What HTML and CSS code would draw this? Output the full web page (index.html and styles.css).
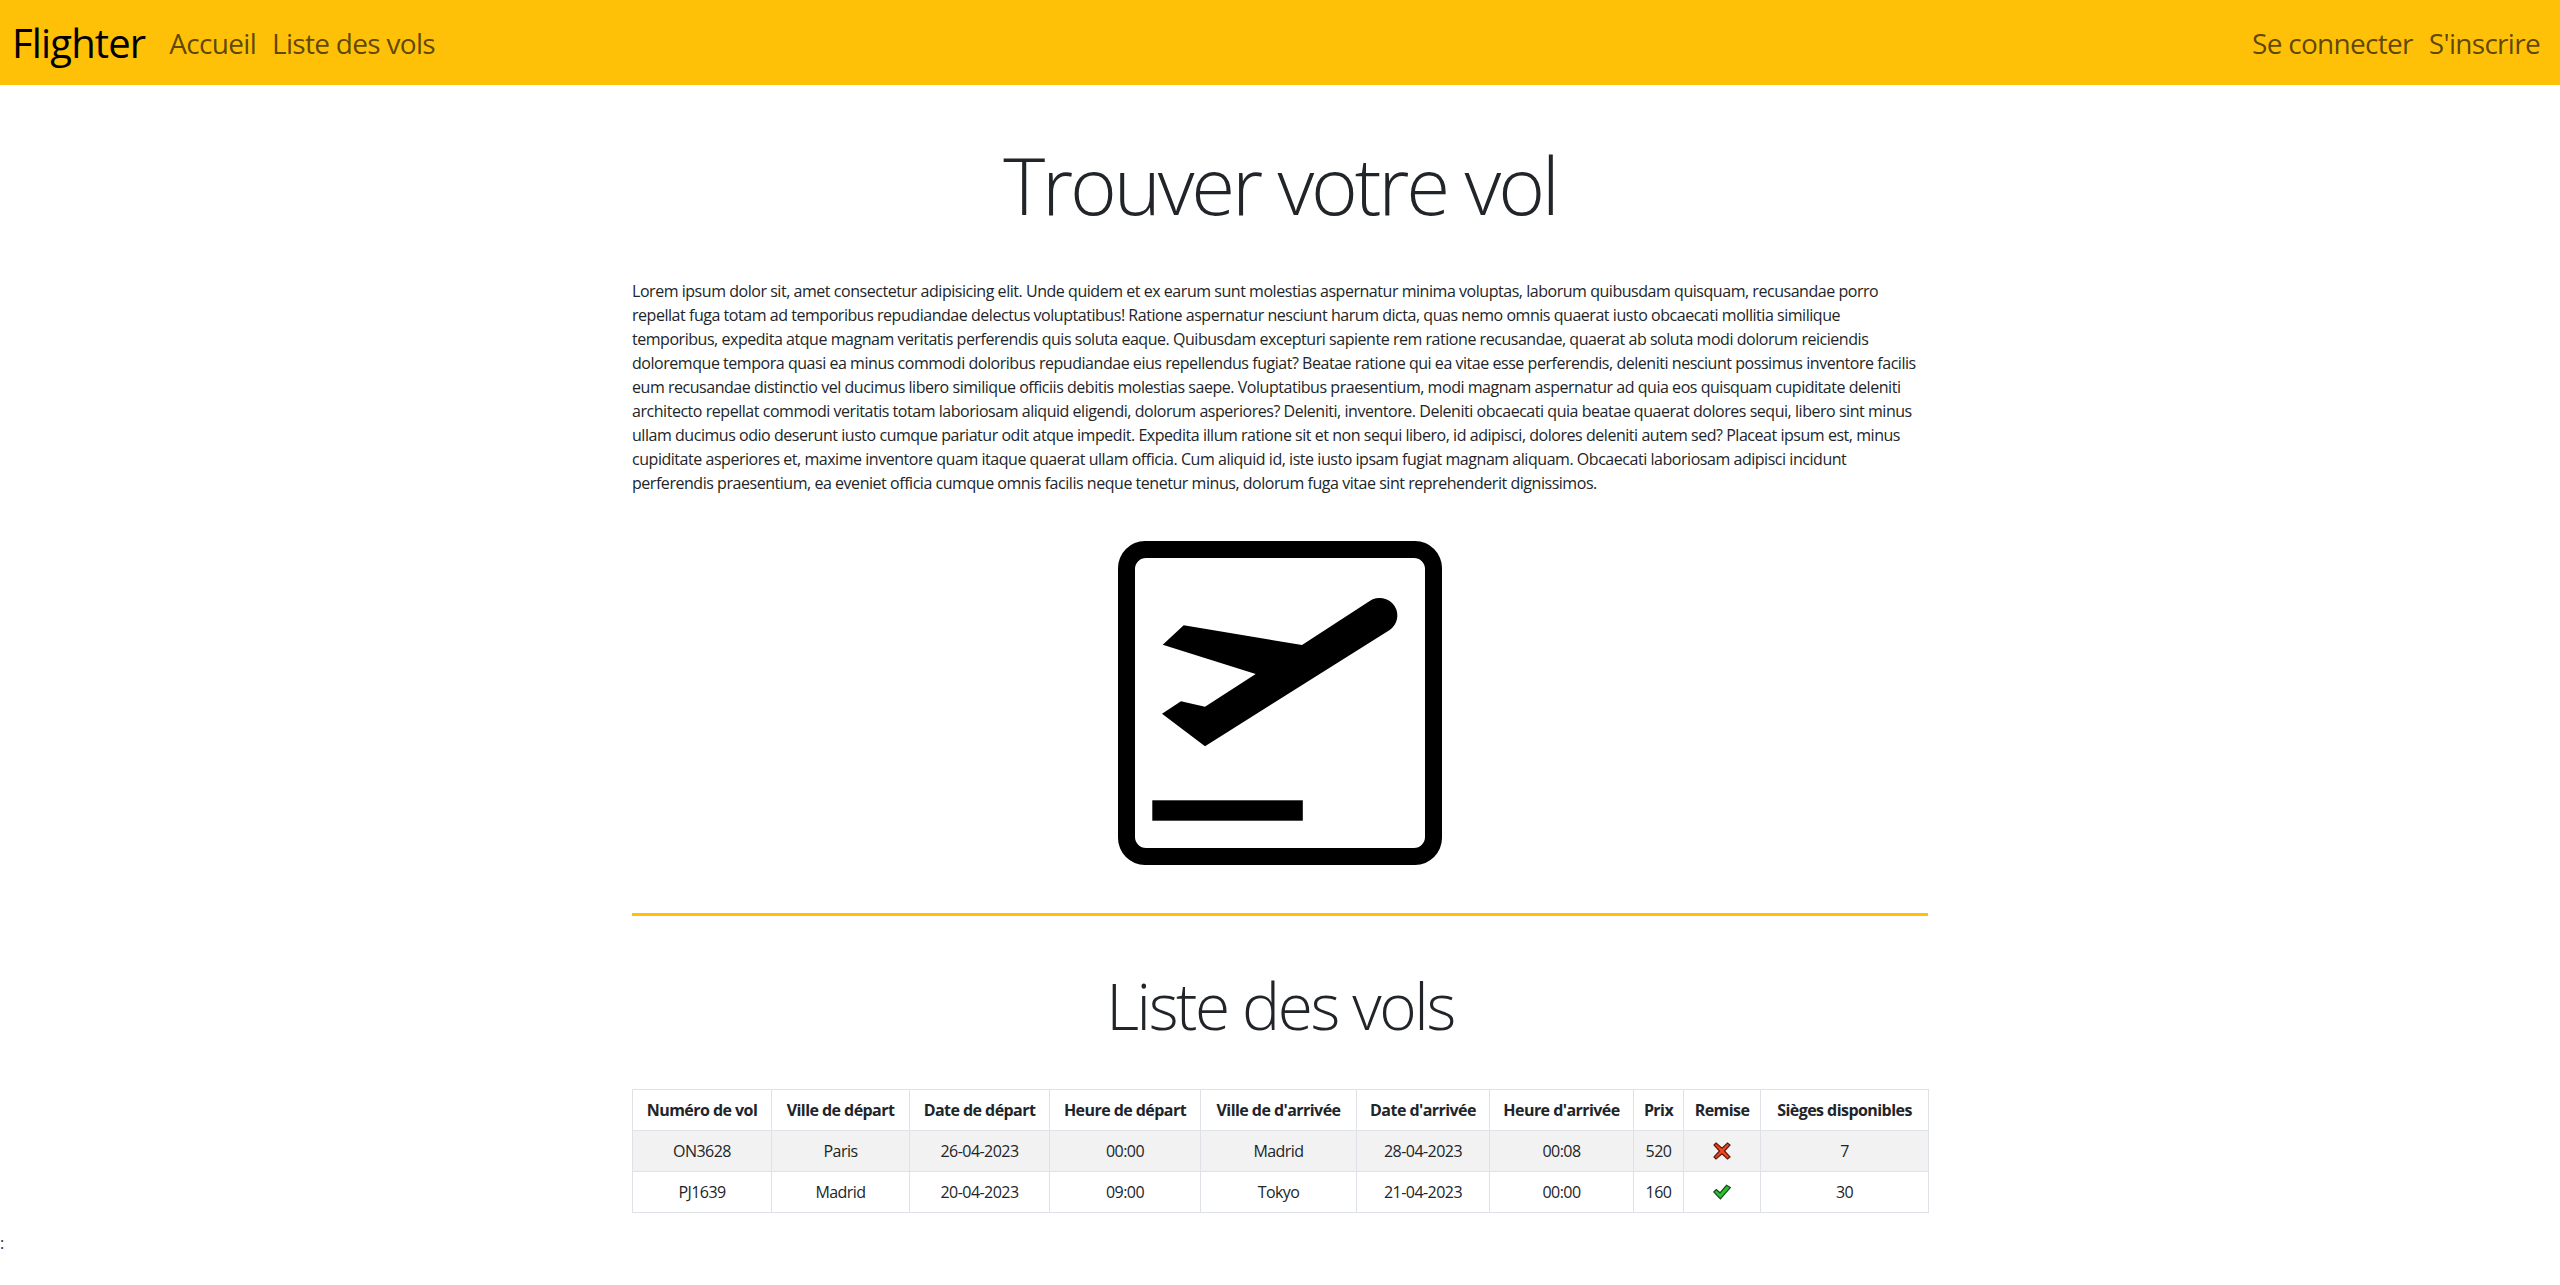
FILE: index.html
```html
<!DOCTYPE html>
<html lang="fr">
<head>
    <meta charset="UTF-8">
    <meta name="viewport" content="width=device-width, initial-scale=1.0">
    <title>Flighter</title>
    <link rel="stylesheet" href="styles.css">
</head>
<body>
    <nav class="navbar">
        <a class="brand" href="#">Flighter</a>
        <ul class="nav-links">
            <li><a href="#">Accueil</a></li>
            <li><a href="#">Liste des vols</a></li>
        </ul>
        <ul class="nav-links nav-right">
            <li><a href="#">Se connecter</a></li>
            <li><a href="#">S'inscrire</a></li>
        </ul>
    </nav>

    <main class="container">
        <h1 class="title">Trouver votre vol</h1>
        <p class="intro">Lorem ipsum dolor sit, amet consectetur adipisicing elit. Unde quidem et ex earum sunt molestias aspernatur minima voluptas, laborum quibusdam quisquam, recusandae porro<br>repellat fuga totam ad temporibus repudiandae delectus voluptatibus! Ratione aspernatur nesciunt harum dicta, quas nemo omnis quaerat iusto obcaecati mollitia similique<br>temporibus, expedita atque magnam veritatis perferendis quis soluta eaque. Quibusdam excepturi sapiente rem ratione recusandae, quaerat ab soluta modi dolorum reiciendis<br>doloremque tempora quasi ea minus commodi doloribus repudiandae eius repellendus fugiat? Beatae ratione qui ea vitae esse perferendis, deleniti nesciunt possimus inventore facilis<br>eum recusandae distinctio vel ducimus libero similique officiis debitis molestias saepe. Voluptatibus praesentium, modi magnam aspernatur ad quia eos quisquam cupiditate deleniti<br>architecto repellat commodi veritatis totam laboriosam aliquid eligendi, dolorum asperiores? Deleniti, inventore. Deleniti obcaecati quia beatae quaerat dolores sequi, libero sint minus<br>ullam ducimus odio deserunt iusto cumque pariatur odit atque impedit. Expedita illum ratione sit et non sequi libero, id adipisci, dolores deleniti autem sed? Placeat ipsum est, minus<br>cupiditate asperiores et, maxime inventore quam itaque quaerat ullam officia. Cum aliquid id, iste iusto ipsam fugiat magnam aliquam. Obcaecati laboriosam adipisci incidunt<br>perferendis praesentium, ea eveniet officia cumque omnis facilis neque tenetur minus, dolorum fuga vitae sint reprehenderit dignissimos.</p>

        <div class="logo">
            <svg width="324" height="324" viewBox="0 0 324 324">
                <path fill-rule="evenodd" d="M27 0H297A27 27 0 0 1 324 27V297A27 27 0 0 1 297 324H27A27 27 0 0 1 0 297V27A27 27 0 0 1 27 0ZM28 17A11 11 0 0 0 17 28V296A11 11 0 0 0 28 307H296A11 11 0 0 0 307 296V28A11 11 0 0 0 296 17Z"/>
                <path d="M65.7 84.3L184 104L251.7 60A16.8 16.8 0 0 1 271.7 89L87 205.3L44 172.7L63 160.3L87 165.7L137.7 133L44.7 103.7Z"/>
                <rect x="34.3" y="259.3" width="150.5" height="20.4"/>
            </svg>
        </div>

        <hr class="divider">

        <h2 class="subtitle">Liste des vols</h2>

        <table class="flights">
            <colgroup>
                <col class="col-139">
                <col class="col-138">
                <col class="col-140">
                <col class="col-151">
                <col class="col-156">
                <col class="col-133">
                <col class="col-144">
                <col class="col-50">
                <col class="col-77">
                <col class="col-168">
            </colgroup>
            <thead>
                <tr>
                    <th>Numéro de vol</th>
                    <th>Ville de départ</th>
                    <th>Date de départ</th>
                    <th>Heure de départ</th>
                    <th>Ville de d'arrivée</th>
                    <th>Date d'arrivée</th>
                    <th>Heure d'arrivée</th>
                    <th>Prix</th>
                    <th>Remise</th>
                    <th>Sièges disponibles</th>
                </tr>
            </thead>
            <tbody>
                <tr class="striped">
                    <td>ON3628</td>
                    <td>Paris</td>
                    <td>26-04-2023</td>
                    <td>00:00</td>
                    <td>Madrid</td>
                    <td>28-04-2023</td>
                    <td>00:08</td>
                    <td>520</td>
                    <td>
                        <svg class="mark" width="18" height="18" viewBox="0 0 18 18">
                            <path fill="#ee451c" stroke="#5c1a12" stroke-width="1.2" d="M3 1L9 6.2L14.5 1L17 3L11.5 9L17 15L14.5 17L9 11.8L3 17L1 15L6.5 9L1 3Z"/>
                        </svg>
                    </td>
                    <td>7</td>
                </tr>
                <tr>
                    <td>PJ1639</td>
                    <td>Madrid</td>
                    <td>20-04-2023</td>
                    <td>09:00</td>
                    <td>Tokyo</td>
                    <td>21-04-2023</td>
                    <td>00:00</td>
                    <td>160</td>
                    <td>
                        <svg class="mark" width="18" height="18" viewBox="0 0 18 18">
                            <path fill="#2cc02c" stroke="#14491a" stroke-width="1.2" d="M0.8 9L3.3 6.5L7 9.8L13.5 2.3L17.3 4.6L7.4 15.8Z"/>
                        </svg>
                    </td>
                    <td>30</td>
                </tr>
            </tbody>
        </table>
    </main>
    <div class="stray">:</div>
</body>
</html>
```

FILE: styles.css
```css
* {
    box-sizing: border-box;
}
body {
    margin: 0;
    font-family: "Open Sans", "Noto Sans", sans-serif;
    font-size: 16px;
    line-height: 24px;
    color: #212529;
    background-color: #fff;
}
a {
    text-decoration: none;
}
.navbar {
    display: flex;
    align-items: center;
    height: 85px;
    padding: 0 20px 0 12px;
    background-color: #ffc107;
}
.brand {
    font-size: 40px;
    line-height: 60px;
    color: #000;
    margin-right: 24px;
    letter-spacing: -0.85px;
}
.nav-links {
    display: flex;
    gap: 16px;
    margin: 0;
    padding: 0;
    list-style: none;
}
.nav-links a {
    font-size: 28px;
    line-height: 42px;
    color: rgba(0, 0, 0, 0.65);
    letter-spacing: -0.7px;
}
.nav-right {
    margin-left: auto;
}
.container {
    width: 1320px;
    margin: 0 auto;
    padding: 0 12px;
}
.title {
    margin: 51px 0 0;
    font-size: 80px;
    line-height: 96px;
    font-weight: 300;
    text-align: center;
    letter-spacing: -3.2px;
}
.intro {
    margin: 47px 0 0;
    white-space: nowrap;
    letter-spacing: -0.46px;
}
.logo {
    display: flex;
    justify-content: center;
    margin-top: 46px;
}
.divider {
    height: 3px;
    margin: 48px 0 0;
    border: 0;
    background-color: #ffc107;
}
.subtitle {
    margin: 51px 0 0;
    font-size: 64px;
    line-height: 77px;
    font-weight: 300;
    text-align: center;
    letter-spacing: -2.4px;
}
.flights {
    width: 1296px;
    margin-top: 45px;
    border-collapse: collapse;
    table-layout: fixed;
    text-align: center;
}
.col-50 { width: 50px; }
.col-77 { width: 77px; }
.col-133 { width: 133px; }
.col-138 { width: 138px; }
.col-139 { width: 139px; }
.col-140 { width: 140px; }
.col-144 { width: 144px; }
.col-151 { width: 151px; }
.col-156 { width: 156px; }
.col-168 { width: 168px; }
.flights th,
.flights td {
    height: 41px;
    padding: 8px 0;
    border: 1px solid #dee2e6;
    white-space: nowrap;
    letter-spacing: -0.55px;
}
.flights th {
    font-weight: 700;
    letter-spacing: -0.55px;
}
.striped td {
    background-color: #f2f2f2;
}
.mark {
    display: block;
    margin: 0 auto;
}
.stray {
    margin-top: 18px;
}
```
